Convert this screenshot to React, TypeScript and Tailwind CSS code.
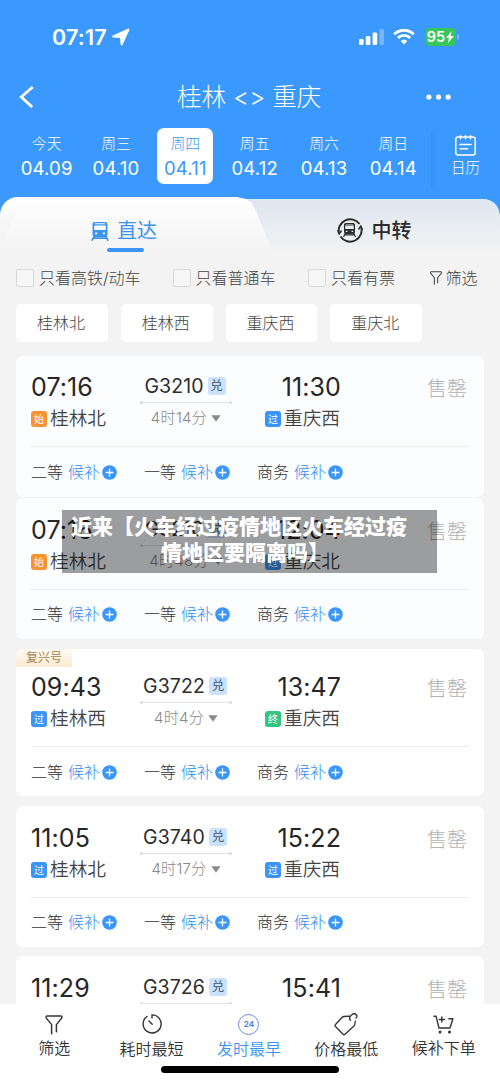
import type { ReactNode } from "react";

type Mark = "始" | "过" | "终";

interface Train {
  depart: string;
  arrive: string;
  from: string;
  to: string;
  fromMark: Mark;
  toMark: Mark;
  code: string;
  duration: string;
  fuxing?: boolean;
  box: string;
  info: string;
  seats: string;
}

const trains: Train[] = [
  { depart: "07:16", arrive: "11:30", from: "桂林北", to: "重庆西", fromMark: "始", toMark: "过", code: "G3210", duration: "4时14分", box: "h-[141px] bg-[#fcfdff]", info: "", seats: "mt-[13px]" },
  { depart: "07:16", arrive: "12:04", from: "桂林北", to: "重庆北", fromMark: "始", toMark: "过", code: "G3210", duration: "4时48分", box: "mt-px h-[141px] bg-[#fcfdff]", info: "mt-px", seats: "mt-[12px]" },
  { depart: "09:43", arrive: "13:47", from: "桂林西", to: "重庆西", fromMark: "过", toMark: "终", code: "G3722", duration: "4时4分", fuxing: true, box: "mt-[10px] h-[147px] bg-white", info: "mt-[7px]", seats: "mt-[13px]" },
  { depart: "11:05", arrive: "15:22", from: "桂林北", to: "重庆西", fromMark: "过", toMark: "过", code: "G3740", duration: "4时17分", box: "mt-[10px] h-[141px] bg-white", info: "mt-px", seats: "mt-[12px]" },
  { depart: "11:29", arrive: "15:41", from: "桂林北", to: "重庆西", fromMark: "过", toMark: "过", code: "G3726", duration: "4时12分", box: "mt-[9px] h-[141px] bg-white", info: "mt-px", seats: "mt-[12px]" },
];

const markColor: Record<Mark, string> = {
  始: "bg-[#fb9232]",
  过: "bg-[#3b95f8]",
  终: "bg-[#33c481]",
};

const dates = [
  ["今天", "04.09"],
  ["周三", "04.10"],
  ["周四", "04.11"],
  ["周五", "04.12"],
  ["周六", "04.13"],
  ["周日", "04.14"],
];

function Station({ mark, name }: { mark: Mark; name: string }) {
  return (
    <div className="flex h-6 items-center">
      <span className={`mr-[3px] flex size-4 items-center justify-center rounded-[3px] text-[10px] leading-none text-white ${markColor[mark]}`}>{mark}</span>
      <span className="text-[18.7px] leading-6 font-[350] text-[#444]">{name}</span>
    </div>
  );
}

function Seat({ label }: { label: string }) {
  return (
    <div className="flex w-[113px] items-center text-[16px] leading-6 font-light">
      <span className="text-[#333]">{label}</span>
      <span className="ml-[5px] text-[#2f8df5]">候补</span>
      <svg className="ml-[1.500px] size-[15px]" viewBox="0 0 15 15">
        <circle cx="7.5" cy="7.5" r="7.3" fill="#3b96f9" />
        <path d="M7.5 3.6v7.8M3.6 7.5h7.8" stroke="#fff" strokeWidth="1.3" />
      </svg>
    </div>
  );
}

function TrainCard({ t }: { t: Train }) {
  return (
    <div className={`relative shrink-0 overflow-hidden rounded-[7px] px-[15px] ${t.box}`}>
      {t.fuxing && (
        <span className="absolute top-0 left-0 flex h-[18px] w-14 items-center justify-center bg-linear-to-b from-[#fffaf4] to-[#fdebd2] text-[12px] leading-none text-[#a58350]">复兴号</span>
      )}
      <div className={`flex h-[91px] border-b border-[#ebecee] ${t.info}`}>
        <div className="w-[109px] pt-4">
          <div className="h-[30px] text-[25px] leading-[30px] tracking-[0.1px] text-[#262626]">{t.depart}</div>
          <div className="mt-[5px]"><Station mark={t.fromMark} name={t.from} /></div>
        </div>
        <div className="w-[92px] pt-[18px]">
          <div className="-ml-[2px] flex h-6 items-center justify-center">
            <span className="text-[19.500px] leading-6 tracking-[0.1px] text-[#2d2d2d]">{t.code}</span>
            <span className="ml-1 flex h-[18px] w-[18px] items-center justify-center rounded-[3px] bg-[#cbe2fd] text-[12.500px] leading-none text-[#435770]">兑</span>
          </div>
          <div className="mt-[3px] flex h-[3px] items-center justify-between">
            <i className="size-[3px] rounded-full bg-[#d9dadd]" />
            <i className="h-px flex-1 bg-[#e1e2e4]" />
            <i className="size-[3px] rounded-full bg-[#d9dadd]" />
          </div>
          <div className="mt-[4px] flex h-5 items-center justify-center text-[15px] leading-5 font-light tracking-[0.3px] text-[#888]">
            {t.duration}
            <svg className="ml-[4px] h-[7px] w-[10px]" viewBox="0 0 10 7"><path d="M.4.3h9.2L5 6.800z" fill="#8b8b8b" /></svg>
          </div>
        </div>
        <div className="ml-[33px] w-[76px] pt-4">
          <div className="h-[30px] text-right text-[25px] leading-[30px] tracking-[0.1px] text-[#262626]">{t.arrive}</div>
          <div className="mt-[5px]"><Station mark={t.toMark} name={t.to} /></div>
        </div>
        <div className="mr-[2px] ml-auto pt-[20px] text-[20px] leading-[26px] font-light text-[#b2b2b2]">售罄</div>
      </div>
      <div className={`flex ${t.seats}`}>
        <Seat label="二等" />
        <Seat label="一等" />
        <Seat label="商务" />
      </div>
    </div>
  );
}

function Funnel({ className }: { className: string }) {
  return (
    <svg className={className} viewBox="0 0 18 20" fill="none" stroke="currentColor" strokeWidth="1.5" strokeLinejoin="round" strokeLinecap="round">
      <path d="M6.600 18.800V9.600L1.300 3.100Q.6 1 2.200 1h13.600q1.600 0 .9 2.100l-5.300 6.500v7.200" />
    </svg>
  );
}

function TrainFront({ className }: { className: string }) {
  return (
    <svg className={className} viewBox="0 0 18 19">
      <path fill="currentColor" fillRule="evenodd" d="M4 0h10q2.500 0 2.500 2.500V12q0 3-2.500 3H4q-2.500 0-2.500-3V2.500Q1.500 0 4 0ZM3.200 3.500V8h11.600V3.500ZM4 10.500v1.700h2.200v-1.700Zm7.800 0v1.700H14v-1.700ZM4 1.300v.9h10v-.9Z" />
      <path d="M3.600 14 .8 18.700M14.400 14l2.800 4.700M3 16.200h12" stroke="currentColor" strokeWidth="1.700" />
    </svg>
  );
}

function Check({ label, className }: { label: string; className: string }) {
  return (
    <label className={`flex items-center ${className}`}>
      <span className="mr-[5px] size-[18px] rounded-[2px] border border-[#d9d9d9] bg-[#f6f6f6]" />
      {label}
    </label>
  );
}

function NavItem({ icon, label, className = "" }: { icon: ReactNode; label: string; className?: string }) {
  return (
    <div className={`flex w-[97.4px] shrink-0 flex-col items-center ${className}`}>
      <div className="flex h-6 items-center justify-center">{icon}</div>
      <span className="mt-[3px] text-[16px] leading-5 font-[350]">{label}</span>
    </div>
  );
}

export default function App() {
  return (
    <div className="relative flex h-[1083px] w-[500px] flex-col overflow-hidden bg-[#f3f3f3] font-['Inter','Noto_Sans_CJK_SC',sans-serif] whitespace-nowrap text-[#333]">
      <header className="h-[197px] shrink-0 bg-[#3b98fc] text-white">
        <div className="flex h-[74px] items-center pl-[52px]">
          <span className="text-[21.500px] leading-7 font-semibold tracking-[0.2px]">07:17</span>
          <svg className="ml-[5px] size-[18px]" viewBox="0 0 18 18"><path d="M15.800.7.900 7.600Q-.6 9 1.200 9.500L8 10l.6 6.600q.7 1.800 1.900.4L17.300 2.200Q17.600 0 15.800.7Z" fill="#fff" /></svg>
          <svg className="ml-auto h-4 w-[25px]" viewBox="0 0 25 16" fill="#fff">
            <rect x="0" y="10" width="4.600" height="6" rx="1.300" />
            <rect x="6.800" y="7" width="4.600" height="9" rx="1.300" />
            <rect x="13.600" y="3.500" width="4.600" height="12.500" rx="1.300" />
            <rect x="20.400" y="0" width="4.600" height="16" rx="1.300" opacity=".3" />
          </svg>
          <svg className="ml-[9px] h-4 w-[22px]" viewBox="0 0 22 16" fill="none" stroke="#fff" strokeWidth="2.900">
            <path d="M1.200 5.200a14 14 0 0 1 19.600 0M4.900 8.900a8.700 8.700 0 0 1 12.200 0" />
            <path d="M7.700 12a4.800 4.800 0 0 1 6.600 0L11 15.500Z" fill="#fff" stroke="none" />
          </svg>
          <div className="ml-[10px] flex h-[18px] w-[31px] items-center justify-center rounded-[5px] bg-[#36c75b] text-[14.500px] leading-none font-semibold">
            95
            <svg className="ml-px h-3 w-2" viewBox="0 0 8 12"><path d="M5.700 0 0 6.800h3L2 12l6-7H4.700Z" fill="#fff" /></svg>
          </div>
          <span className="mr-[41px] ml-px h-[6px] w-[2px] rounded-r-full bg-[#72b6fd]" />
        </div>
        <div className="flex h-[46px] items-center">
          <svg className="ml-[19px] h-[22px] w-[15px]" viewBox="0 0 15 23" fill="none" stroke="#fff" strokeWidth="2.900"><path d="M14 1 2 11.500 13.500 22" /></svg>
          <h1 className="ml-[143px] text-[24.600px] leading-8 font-light">桂林 &lt;&gt; 重庆</h1>
          <svg className="mr-[49px] ml-auto h-[6px] w-[25px]" viewBox="0 0 25 6" fill="#fff"><circle cx="2.900" cy="3" r="2.600" /><circle cx="12.500" cy="3" r="2.600" /><circle cx="22.100" cy="3" r="2.600" /></svg>
        </div>
        <div className="flex h-[77px]">
          <div className="ml-3 grid w-[416px] grid-cols-6 justify-items-center pt-2">
            {dates.map(([day, date]) => (
              <div key={date} className={`flex h-14 w-14 flex-col items-center rounded-[7px] pt-[5px] ${date === "04.11" ? "bg-white text-[#3b98fc]" : ""}`}>
                <span className="text-[14.800px] leading-[22px] font-light">{day}</span>
                <span className="mt-px text-[18.500px] leading-6 tracking-[0.2px]">{date}</span>
              </div>
            ))}
          </div>
          <div className="mt-3 ml-[3px] flex h-14 flex-1 flex-col items-center bg-linear-to-r from-[#3791f4] via-[#3b98fc] via-8% to-[#3b98fc]">
            <svg className="mt-[3px] h-[21px] w-[21px]" viewBox="0 0 21 21" fill="none" stroke="#fff" strokeWidth="1.500" strokeLinecap="round">
              <rect x=".8" y="2" width="19.400" height="18" rx="2.200" /><path d="M5.500.8v3M10.500.8v3M15.500.8v3M5 9.500h11M5 13.800h7.500" />
            </svg>
            <span className="mt-[2px] text-[14.500px] leading-5 font-light">日历</span>
          </div>
        </div>
      </header>

      <div className="h-[56px] shrink-0 bg-[#3b98fc]">
        <div className="relative flex h-full rounded-t-[18px] bg-linear-to-b from-white to-[#f3f3f3]">
          <svg className="absolute inset-0 h-full w-[500px]" viewBox="0 0 500 56">
            <defs>
              <linearGradient id="transferTab" x1="0" y1="0" x2="0" y2="1"><stop stopColor="#dee6f0" /><stop offset="1" stopColor="#f3f3f3" /></linearGradient>
            </defs>
            <path d="M237 0H500V20Q498 2 482 2H246Z" fill="#3b98fc" />
            <path d="M245 2H482Q500 3 500 22V56H273L255 12Q252 4 245 2Z" fill="url(#transferTab)" />
            <path d="M247 2.500H482Q494 3 498 12" fill="none" stroke="#d6f1ff" strokeWidth="1" />
            <path d="M0 20 15 15 0 56Z" fill="#f3f3f3" opacity=".4" />
          </svg>
          <div className="relative flex w-[250px] flex-col items-center">
            <div className="mt-[22px] mr-[2px] flex h-6 items-center text-[20px] leading-6 text-[#3b94f4]">
              <TrainFront className="mr-2 h-[19px] w-[18px]" />直达
            </div>
            <span className="mt-[5px] h-[3.500px] w-[37px] rounded-full bg-[#3b94f4]" />
          </div>
          <div className="relative flex w-[250px] justify-center">
            <div className="mt-[20px] mr-[2px] flex h-[26px] items-center text-[20px] leading-6 font-medium text-[#2b2b2b]">
              <span className="relative mr-[9px] flex size-[26px] items-center justify-center">
                <svg className="absolute inset-0 size-[26px]" viewBox="0 0 26 26" fill="none" stroke="currentColor" strokeWidth="1.900">
                  <path d="M2 16.500A11.500 11.500 0 0 1 22.500 7M24 9.500A11.500 11.500 0 0 1 3.500 19.500" />
                  <path d="m.7 13 1.500 4 2.300-3.500M25.300 13l-1.500-4-2.300 3.500" strokeWidth="1.400" />
                </svg>
                <TrainFront className="h-[14px] w-[15px]" />
              </span>
              <span className="pt-[2px]">中转</span>
            </div>
          </div>
        </div>
      </div>

      <div className="flex h-[50px] shrink-0 items-center px-4 text-[16px] font-light text-[#444]">
        <Check label="只看高铁/动车" className="w-[156.500px]" />
        <Check label="只看普通车" className="w-[135.500px]" />
        <Check label="只看有票" className="w-[120.500px]" />
        <Funnel className="mr-[3px] h-[14px] w-[14px]" />筛选
      </div>
      <div className="flex shrink-0 gap-[13px] pt-px pl-4">
        {["桂林北", "桂林西", "重庆西", "重庆北"].map((s) => (
          <button key={s} className="h-[38px] w-[91.800px] rounded-[5px] bg-white pr-[2px] text-[16px] leading-6 font-light text-[#444]">{s}</button>
        ))}
      </div>

      <main className="mt-[14px] flex min-h-0 flex-1 flex-col overflow-hidden px-4">
        {trains.map((t, i) => <TrainCard key={i} t={t} />)}
      </main>

      <nav className="relative h-[79px] shrink-0 bg-white pt-[8px]">
        <div className="flex pl-[5.500px]">
          <NavItem className="-mt-px" label="筛选" icon={<Funnel className="mt-[3px] h-5 w-[18px]" />} />
          <NavItem label="耗时最短" icon={
            <svg className="size-5" viewBox="0 0 20 20" fill="none" stroke="currentColor" strokeWidth="1.400" strokeLinecap="round"><path d="M5 2.500A9 9 0 1 0 10 .9v3M7 7l3.200 3.200" /></svg>
          } />
          <NavItem className="text-[#3b94f4]" label="发时最早" icon={
            <span className="flex size-[21px] items-center justify-center rounded-full border-[1.500px] border-[#668fea] text-[8px] leading-none font-bold text-[#4f83e5]">24</span>
          } />
          <NavItem label="价格最低" icon={
            <svg className="h-[23px] w-[24px]" viewBox="0 0 24 23" fill="none" stroke="currentColor" strokeWidth="1.300" strokeLinecap="round" strokeLinejoin="round"><path d="M15.500 3.200 10 3.500Q8.800 3.600 8 4.500L1.500 11.500q-1 1 0 2l7.500 7.800q1 1 2 0L20 13q.8-.8.9-2l.4-3M16.500 7.500Q14.500 4.500 17.500 2t5 0q1.200 1.600-.5 3" /></svg>
          } />
          <NavItem className="-mt-px" label="候补下单" icon={
            <svg className="mt-[3px] h-[19px] w-[21px]" viewBox="0 0 21 19" fill="none" stroke="currentColor" strokeWidth="1.400" strokeLinecap="round" strokeLinejoin="round"><path d="M1 1.200h2L6 13h11l2.900-9.200h-4M8.800 2v5M6.300 4.500h5" /><circle cx="7" cy="17" r=".8" fill="currentColor" /><circle cx="16.500" cy="17" r=".8" fill="currentColor" /></svg>
          } />
        </div>
        <span className="absolute top-[62px] left-[161px] h-[7px] w-[178px] rounded-full bg-black" />
      </nav>

      <div className="absolute top-[510px] left-[62px] h-[63px] w-[375px] bg-black/[0.38] pt-[4px] pl-[9px] text-[21px] leading-[26px] font-black text-white">
        <div>近来【火车经过疫情地区火车经过疫</div>
        <div className="pl-[90px]">情地区要隔离吗】</div>
      </div>
    </div>
  );
}
